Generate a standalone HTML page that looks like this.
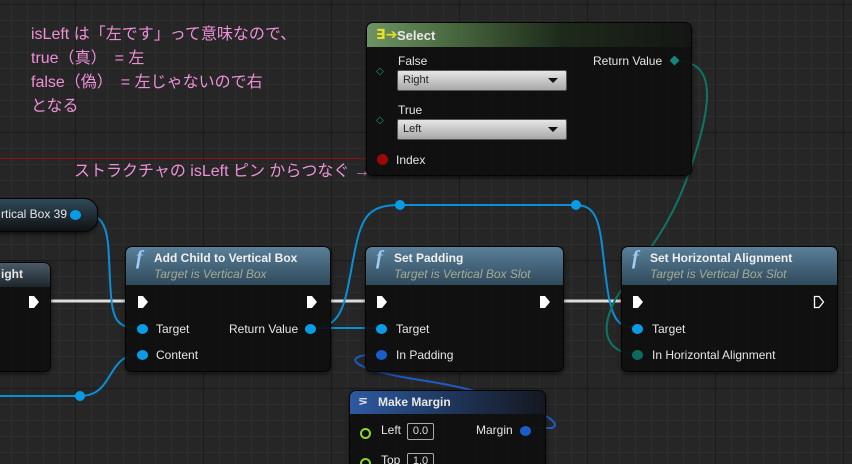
<!DOCTYPE html>
<html style="height:464px;overflow:hidden"><head><meta charset="utf-8"><style>
html,body{height:464px;overflow:hidden}
body{margin:0;width:852px;height:464px;overflow:hidden;background:#262626;font-family:"Liberation Sans","DejaVu Sans",sans-serif;position:relative}
.grid{position:absolute;inset:0;background-image:
linear-gradient(#1b1b1b 1px,transparent 1px),linear-gradient(90deg,#1b1b1b 1px,transparent 1px),
linear-gradient(#2e2e2e 1px,transparent 1px),linear-gradient(90deg,#2e2e2e 1px,transparent 1px);
background-size:128px 128px,128px 128px,16px 16px,16px 16px;background-position:0 4px,75px 0,0 4px,11px 0}
.node{position:absolute;background:rgba(14,15,14,.93);border:1px solid #050505;border-radius:7px;box-shadow:0 2px 4px rgba(0,0,0,.6);overflow:hidden;color:#e8e8e8;font-size:12px}
.hd{height:38px;background:linear-gradient(180deg,#5a7f99,#2f4a5c);position:relative;border-bottom:1px solid #111}
.hd b{position:absolute;left:28px;top:4px;font-size:12px;color:#f0f0f0}
.hd i{position:absolute;left:28px;top:20px;font-size:12px;color:#a3ab95}
.hd .f{position:absolute;left:10px;top:0px;font-family:"Liberation Serif",serif;font-style:italic;font-size:20px;color:#9ccdf2;font-weight:bold}
.t{position:absolute;font-size:12px;color:#e6e6e6;white-space:nowrap}
.pk{position:absolute;font-family:"Liberation Sans","Noto Sans CJK JP",sans-serif;color:#ee90d8;font-size:16px;line-height:24px;white-space:nowrap}
.dd{position:absolute;width:168px;height:19px;background:linear-gradient(#e6e6e6,#a8a8a8);border:1px solid #555;border-radius:2px;color:#222;font-size:11px;line-height:19px;text-indent:5px}
.dd:after{content:"";position:absolute;right:8px;top:7px;border:5px solid transparent;border-top:5px solid #111;border-bottom:0}
</style></head><body>
<div class="grid"></div>
<div style="position:absolute;left:0;top:158px;width:366px;height:1px;background:#8e1010"></div>
<div class="pk" style="left:31px;top:23px">isLeft は「左です」って意味なので、<br>true（真）　= 左<br>false（偽）　=  左じゃないので右<br>となる</div>
<div class="pk" style="left:74px;top:160px">ストラクチャの isLeft  ピン からつなぐ →</div>

<svg style="position:absolute;left:0;top:0" width="852" height="464">
<g fill="none" stroke-width="2">
<path d="M49 301H125M329 301H365M562 301H621" stroke="#ddd" stroke-width="3"/>
<path d="M84 214C110 214 108 240 110 280 112 320 115 328 140 328" stroke="#0a8fd6"/>
<path d="M0 396H80C115 396 105 355 140 354" stroke="#0a8fd6"/>
<path d="M312 328C345 328 345 300 355 250 362 215 370 205 400 205H576C600 205 600 230 605 270 610 315 615 328 636 328" stroke="#0a8fd6"/>
<path d="M312 328H380" stroke="#0a8fd6"/>
<path d="M676 61C720 61 710 110 690 170 670 230 640 260 615 300 595 340 615 354 636 354" stroke="#0e7566"/>
<path d="M380 354C340 355 345 368 420 380 500 392 570 420 552 428H523" stroke="#1f5bc4"/>
</g>
<circle cx="400" cy="205" r="5" fill="#0a9be6"/><circle cx="576" cy="205" r="5" fill="#0a9be6"/><circle cx="80" cy="396" r="5" fill="#0a9be6"/>
</svg>

<div class="node" style="left:366px;top:22px;width:324px;height:152px">
<div style="height:24px;background:linear-gradient(90deg,#6e9363,#4a6a40 25%,#1d2a1a 60%,#141614)"><span style="position:absolute;left:9px;top:3px;color:#e8e020;font-weight:bold;font-size:14px">∃➔</span><b style="position:absolute;left:30px;top:5px;font-size:13px">Select</b></div>
<div class="t" style="left:31px;top:31px">False</div>
<div class="t" style="left:9px;top:43px;color:#0e9a8c;font-size:10px">◇</div>
<div class="dd" style="left:30px;top:47px">Right</div>
<div class="t" style="left:31px;top:80px">True</div>
<div class="t" style="left:9px;top:92px;color:#0e9a8c;font-size:10px">◇</div>
<div class="dd" style="left:30px;top:96px">Left</div>
<div style="position:absolute;left:10px;top:131px;width:11px;height:11px;border-radius:50%;background:#9a0a0a"></div>
<div class="t" style="left:29px;top:130px">Index</div>
<div class="t" style="left:226px;top:31px">Return Value</div>
<div style="position:absolute;left:304px;top:34px;width:7px;height:7px;background:#13857a;transform:rotate(45deg)"></div>
</div>

<div class="node" style="left:-20px;top:198px;width:116px;height:32px;border-radius:14px;background:linear-gradient(#2f4a5a,#111)">
<div class="t" style="left:20px;top:8px">rtical Box 39</div>
<div style="position:absolute;left:89px;top:11px;width:11px;height:10px;border-radius:50%;background:#0a9be6"></div>
</div>

<div class="node" style="left:-20px;top:262px;width:69px;height:108px">
<div style="height:24px;background:linear-gradient(#4a5a66,#1e262c)"><b class="t" style="left:20px;top:4px">ight</b></div>
<svg style="position:absolute;left:47px;top:32px" width="12" height="14"><path d="M1 1H6L11 7 6 13H1Z" fill="#fff"/></svg>
</div>

<div class="node" style="left:125px;top:246px;width:204px;height:124px">
<div class="hd"><span class="f">f</span><b>Add Child to Vertical Box</b><i>Target is Vertical Box</i></div>
<svg style="position:absolute;left:11px;top:48px" width="12" height="14"><path d="M1 1H6L11 7 6 13H1Z" fill="#fff"/></svg>
<svg style="position:absolute;left:180px;top:48px" width="12" height="14"><path d="M1 1H6L11 7 6 13H1Z" fill="#fff"/></svg>
<div style="position:absolute;left:11px;top:77px;width:11px;height:10px;border-radius:50%;background:#0a9be6"></div>
<div class="t" style="left:30px;top:75px">Target</div>
<div style="position:absolute;left:11px;top:103px;width:11px;height:10px;border-radius:50%;background:#0a9be6"></div>
<div class="t" style="left:30px;top:101px">Content</div>
<div class="t" style="left:103px;top:75px">Return Value</div>
<div style="position:absolute;left:179px;top:77px;width:11px;height:10px;border-radius:50%;background:#0a9be6"></div>
</div>

<div class="node" style="left:365px;top:246px;width:197px;height:124px">
<div class="hd"><span class="f">f</span><b>Set Padding</b><i>Target is Vertical Box Slot</i></div>
<svg style="position:absolute;left:10px;top:48px" width="12" height="14"><path d="M1 1H6L11 7 6 13H1Z" fill="#fff"/></svg>
<svg style="position:absolute;left:173px;top:48px" width="12" height="14"><path d="M1 1H6L11 7 6 13H1Z" fill="#fff"/></svg>
<div style="position:absolute;left:10px;top:77px;width:11px;height:10px;border-radius:50%;background:#0a9be6"></div>
<div class="t" style="left:30px;top:75px">Target</div>
<div style="position:absolute;left:10px;top:103px;width:11px;height:10px;border-radius:50%;background:#1a5cc8"></div>
<div class="t" style="left:30px;top:101px">In Padding</div>
</div>

<div class="node" style="left:621px;top:246px;width:215px;height:124px">
<div class="hd"><span class="f">f</span><b>Set Horizontal Alignment</b><i>Target is Vertical Box Slot</i></div>
<svg style="position:absolute;left:10px;top:48px" width="12" height="14"><path d="M1 1H6L11 7 6 13H1Z" fill="#fff"/></svg>
<svg style="position:absolute;left:191px;top:48px" width="12" height="14"><path d="M1.5 1.5H6L10.5 7 6 12.5H1.5Z" fill="none" stroke="#fff" stroke-width="1.3"/></svg>
<div style="position:absolute;left:10px;top:77px;width:11px;height:10px;border-radius:50%;background:#0a9be6"></div>
<div class="t" style="left:30px;top:75px">Target</div>
<div style="position:absolute;left:10px;top:103px;width:11px;height:10px;border-radius:50%;background:#0c6b5e"></div>
<div class="t" style="left:30px;top:101px">In Horizontal Alignment</div>
</div>

<div class="node" style="left:349px;top:390px;width:195px;height:90px">
<div style="height:23px;background:linear-gradient(90deg,#2d5aa0,#1d3050 60%,#141820)"><span style="position:absolute;left:8px;top:3px;color:#dde;font-weight:bold">⋝</span><b class="t" style="left:28px;top:4px">Make Margin</b></div>
<div style="position:absolute;left:10px;top:37px;width:7px;height:7px;border:2px solid #8fd62a;border-radius:50%"></div>
<div class="t" style="left:31px;top:32px">Left</div>
<div style="position:absolute;left:57px;top:32px;width:25px;height:15px;border:1px solid #aaa;border-radius:2px;color:#ddd;font-size:11px;text-align:center;line-height:15px">0.0</div>
<div class="t" style="left:126px;top:32px">Margin</div>
<div style="position:absolute;left:170px;top:35px;width:11px;height:10px;border-radius:50%;background:#1a5cc8"></div>
<div style="position:absolute;left:10px;top:67px;width:7px;height:7px;border:2px solid #8fd62a;border-radius:50%"></div>
<div class="t" style="left:31px;top:62px">Top</div>
<div style="position:absolute;left:57px;top:62px;width:25px;height:15px;border:1px solid #aaa;border-radius:2px;color:#ddd;font-size:11px;text-align:center;line-height:15px">1.0</div>
</div>
</body></html>
